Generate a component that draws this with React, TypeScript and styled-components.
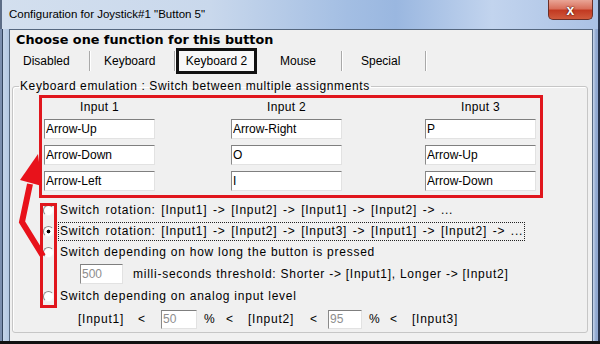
import React from 'react';
import styled, { createGlobalStyle } from 'styled-components';

const GlobalStyle = createGlobalStyle`
  html, body {
    margin: 0;
    padding: 0;
    background: #111;
  }
  body {
    font-family: "Liberation Sans", Arial, sans-serif;
    font-size: 12px;
    color: #000;
  }
`;

const Window = styled.div`
  position: relative;
  width: 600px;
  height: 341px;
  display: flex;
  flex-direction: column;
  overflow: hidden;
`;

const TitleBar = styled.div`
  height: 29px;
  flex: none;
  display: flex;
  align-items: flex-start;
  background: linear-gradient(to right, #d3dfee 0%, #c9d8ec 35%, #a3bee3 58%, #9ab7e0 66%, #c2d4ee 82%, #aac1e4 100%);
  box-shadow: inset 2px 0 #5d6d86, inset -2px 0 #2c3850;
`;

const Title = styled.div`
  padding-left: 9px;
  line-height: 28px;
  font-size: 11.5px;
  color: #000;
`;

const CloseButton = styled.div`
  margin-left: auto;
  margin-right: 7px;
  width: 45px;
  height: 20px;
  box-sizing: border-box;
  border: 1px solid #6b2f27;
  border-top: none;
  border-radius: 0 0 5px 5px;
  background: linear-gradient(#e9a596 0%, #d9705c 45%, #c23a22 55%, #d05a3c 100%);
  display: flex;
  align-items: center;
  justify-content: center;
  color: #fff;
  font-weight: bold;
  font-size: 14px;
  line-height: 1;
  text-shadow: 0 0 2px #4a120a, 0 0 1px #4a120a;
`;

const Body = styled.div`
  flex: 1;
  display: flex;
`;

const LeftEdge = styled.div`
  width: 9px;
  flex: none;
  background: linear-gradient(to right, #7b8eae 0, #7b8eae 2px, #34455e 2px, #34455e 3px, #c4d4e9 3px, #b3c7e2 9px);
`;

const RightEdge = styled.div`
  width: 7px;
  flex: none;
  background: linear-gradient(to right, #c7d5ea 0, #8fa7cf 3px, #93aad2 5px, #27334b 5px);
`;

const Client = styled.div`
  flex: 1;
  display: flex;
  flex-direction: column;
  background: #f0f0f0;
  border: 1px solid #55677f;
  border-bottom: none;
  padding-top: 2px;
`;

const Heading = styled.div`
  font-family: "DejaVu Sans", Verdana, sans-serif;
  font-weight: bold;
  font-size: 12.8px;
  line-height: 16px;
  padding-left: 6px;
`;

const TabRow = styled.div`
  height: 26px;
  display: flex;
  align-items: center;
`;

const Tab = styled.div<{ w: number; pl: number }>`
  width: ${({ w }) => w}px;
  padding-left: ${({ pl }) => pl}px;
  box-sizing: border-box;
  white-space: nowrap;
  line-height: 16px;
`;

const TabSep = styled.div`
  width: 1px;
  height: 20px;
  background: #a9a9a9;
  box-shadow: 1px 0 #ffffff;
`;

const ActiveTab = styled.div`
  margin-left: 1px;
  width: 81px;
  height: 26px;
  box-sizing: border-box;
  border: 3px solid #111;
  background: #f8f8f8;
  display: flex;
  align-items: center;
  justify-content: center;
`;

const Group = styled.fieldset`
  flex: 1;
  margin: 5px 4px 8px 2px;
  padding: 0;
  min-width: 0;
  border: 1px solid #c6c6c6;
  border-radius: 3px;
  box-shadow: inset 1px 1px #fff;
`;

const GroupTitle = styled.legend`
  margin-left: 6px;
  padding: 0 1px;
  line-height: 14px;
  letter-spacing: 0.6px;
`;

const InputsFrame = styled.div`
  margin: 2px 0 0 26px;
  width: 504px;
  height: 103px;
  box-sizing: border-box;
  border: 3px solid #e0161d;
  padding: 0 3px 3px 2px;
`;

const InputGrid = styled.div<{ head?: boolean }>`
  display: grid;
  grid-template-columns: 187px 194px 111px;
  height: ${({ head }) => (head ? '21px' : '20px')};
  margin-bottom: ${({ head }) => (head ? '0' : '6px')};
`;

const ColumnHead = styled.div`
  width: 111px;
  text-align: center;
  line-height: 18px;
  letter-spacing: 0.3px;
`;

const Field = styled.input<{ w: number; h?: number; off?: boolean }>`
  width: ${({ w }) => w}px;
  height: ${({ h }) => h || 20}px;
  box-sizing: border-box;
  margin: 0;
  padding: 0 1px;
  border: 1px solid;
  border-color: #7f7f7f #e2e2e2 #e2e2e2 #8a8a8a;
  background: #fff;
  font: inherit;
  color: ${({ off }) => (off ? '#8e8e8e' : '#000')};
  outline: none;
`;

const Options = styled.div`
  margin-top: 2px;
  display: flex;
  flex-direction: column;
  letter-spacing: 0.75px;
`;

const OptionRow = styled.div<{ h: number; pl?: number }>`
  height: ${({ h }) => h}px;
  padding-left: ${({ pl }) => pl ?? 30}px;
  display: flex;
  align-items: center;
  white-space: nowrap;
`;

const Radio = styled.span<{ checked?: boolean }>`
  width: 11px;
  height: 11px;
  margin-right: 4px;
  box-sizing: border-box;
  border-radius: 50%;
  border: 1px solid;
  border-color: #8a8a8a #f4f4f4 #f4f4f4 #8a8a8a;
  background: ${({ checked }) =>
    checked ? 'radial-gradient(circle, #000 0, #000 1.6px, #fff 2.2px)' : '#fff'};
  flex: none;
`;

const OptionText = styled.span<{ focused?: boolean; wide?: boolean }>`
  border: 1px ${({ focused }) => (focused ? 'dotted #222' : 'solid transparent')};
  padding: 0 1px;
  line-height: 17px;
  word-spacing: ${({ wide }) => (wide ? '1.6px' : '0')};
`;

const Cell = styled.span<{ w?: number }>`
  ${({ w }) => (w ? `width:${w}px;` : '')}
  flex: none;
`;

const Gap = styled.span<{ w: number }>`
  width: ${({ w }) => w}px;
  flex: none;
`;

const Annotation = styled.svg`
  position: absolute;
  left: 0;
  top: 0;
  pointer-events: none;
`;

const tabs = [
  { label: 'Disabled', w: 79, pl: 13 },
  { label: 'Keyboard', w: 84, pl: 14 },
];

const rows = [
  ['Arrow-Up', 'Arrow-Right', 'P'],
  ['Arrow-Down', 'O', 'Arrow-Up'],
  ['Arrow-Left', 'I', 'Arrow-Down'],
];

const App: React.FC = () => {
  return (
    <>
      <GlobalStyle />
      <Window>
        <TitleBar>
          <Title>Configuration for Joystick#1 "Button 5"</Title>
          <CloseButton>x</CloseButton>
        </TitleBar>
        <Body>
          <LeftEdge />
          <Client>
            <Heading>Choose one function for this button</Heading>
            <TabRow>
              {tabs.map((t) => (
                <React.Fragment key={t.label}>
                  <Tab w={t.w} pl={t.pl}>{t.label}</Tab>
                  <TabSep />
                </React.Fragment>
              ))}
              <ActiveTab>Keyboard 2</ActiveTab>
              <Tab w={84} pl={23}>Mouse</Tab>
              <TabSep />
              <Tab w={83} pl={19}>Special</Tab>
              <TabSep />
            </TabRow>
            <Group>
              <GroupTitle>Keyboard emulation : Switch between multiple assignments</GroupTitle>
              <InputsFrame>
                <InputGrid head>
                  <ColumnHead>Input 1</ColumnHead>
                  <ColumnHead>Input 2</ColumnHead>
                  <ColumnHead>Input 3</ColumnHead>
                </InputGrid>
                {rows.map((r, i) => (
                  <InputGrid key={i}>
                    {r.map((v, j) => (
                      <Field key={j} w={111} readOnly value={v} />
                    ))}
                  </InputGrid>
                ))}
              </InputsFrame>
              <Options>
                <OptionRow h={21}>
                  <Radio />
                  <OptionText wide>Switch rotation: [Input1] -&gt; [Input2] -&gt; [Input1] -&gt; [Input2] -&gt; ...</OptionText>
                </OptionRow>
                <OptionRow h={21}>
                  <Radio checked />
                  <OptionText focused wide>
                    Switch rotation: [Input1] -&gt; [Input2] -&gt; [Input3] -&gt; [Input1] -&gt; [Input2] -&gt; ...
                  </OptionText>
                </OptionRow>
                <OptionRow h={21}>
                  <Radio />
                  <OptionText>Switch depending on how long the button is pressed</OptionText>
                </OptionRow>
                <OptionRow h={21} pl={67}>
                  <Field w={43} off readOnly value="500" />
                  <Gap w={10} />
                  <span>milli-seconds threshold: Shorter -&gt; [Input1], Longer -&gt; [Input2]</span>
                </OptionRow>
                <OptionRow h={25}>
                  <Radio />
                  <OptionText>Switch depending on analog input level</OptionText>
                </OptionRow>
                <OptionRow h={20} pl={65}>
                  <Cell w={60}>[Input1]</Cell>
                  <Cell w={23}>&lt;</Cell>
                  <Field w={36} h={19} off readOnly value="50" />
                  <Gap w={7} />
                  <Cell w={22}>%</Cell>
                  <Cell w={22}>&lt;</Cell>
                  <Cell w={62}>[Input2]</Cell>
                  <Cell w={18}>&lt;</Cell>
                  <Field w={34} h={19} off readOnly value="95" />
                  <Gap w={7} />
                  <Cell w={21}>%</Cell>
                  <Cell w={22}>&lt;</Cell>
                  <Cell>[Input3]</Cell>
                </OptionRow>
              </Options>
            </Group>
          </Client>
          <RightEdge />
        </Body>
        <Annotation width={600} height={344} viewBox="0 0 600 344">
          <rect x={41.5} y={204.5} width={14} height={102} fill="none" stroke="#e0161d" strokeWidth={3} />
          <polyline
            points="43,256 22,222 30,184"
            fill="none"
            stroke="#e8121b"
            strokeWidth={6}
            strokeLinejoin="miter"
          />
          <polygon points="38,154 42,186 20,180" fill="#e8121b" />
        </Annotation>
      </Window>
    </>
  );
};

export default App;
